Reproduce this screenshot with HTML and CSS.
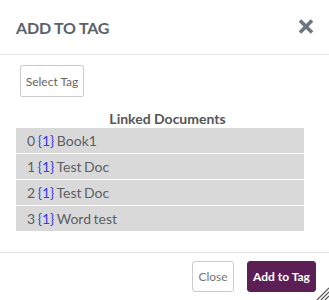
FILE: index.html
```html
<!DOCTYPE html>
<html lang="en">
<head>
  <meta charset="UTF-8" />
  <meta name="viewport" content="width=device-width, initial-scale=1.0" />
  <title>Add to Tag</title>
  <link rel="stylesheet" href="styles.css">
</head>
<body>
  <div class="modal">
    <div class="modal-header">
      <h2>ADD TO TAG</h2>
      <span class="close-x">
        <svg width="16" height="15" viewBox="0 0 16 15">
          <path d="M2 1.5 L14 13.5 M14 1.5 L2 13.5" stroke="#6b7682" stroke-width="3.6" stroke-linecap="butt"/>
        </svg>
      </span>
    </div>

    <div class="modal-body">
      <button class="btn-select">Select Tag</button>
      <h3>Linked Documents</h3>
      <div class="doc-list">
        <div class="doc-row">0 <span class="count">{1}</span> Book1</div>
        <div class="doc-row">1 <span class="count">{1}</span> Test Doc</div>
        <div class="doc-row">2 <span class="count">{1}</span> Test Doc</div>
        <div class="doc-row">3 <span class="count">{1}</span> Word test</div>
      </div>
    </div>

    <div class="modal-footer">
      <button class="btn-close">Close</button>
      <button class="btn-add">Add to Tag</button>
    </div>

    <svg class="resize" width="14" height="14" viewBox="0 0 14 14">
      <path d="M2 14 L14 2 M6 14 L14 6 M10 14 L14 10" stroke="#555" stroke-width="1.2"/>
    </svg>
  </div>
</body>
</html>
```

FILE: styles.css
```css
* {
  box-sizing: border-box;
  margin: 0;
  padding: 0;
  font-family: "Lato", "Liberation Sans", sans-serif;
}

body {
  background: #fff;
}

.modal {
  position: relative;
  width: 329px;
  height: 300px;
  display: flex;
  flex-direction: column;
  background: #fff;
}

.modal-header {
  height: 55px;
  padding: 0 15px 0 16px;
  display: flex;
  align-items: center;
  justify-content: space-between;
  border-bottom: 1px solid #e3e3e3;
}

.modal-header h2 {
  font-size: 16px;
  font-weight: bold;
  color: #58626c;
  letter-spacing: -0.2px;
}

.close-x {
  display: flex;
  margin-top: -1px;
}

.modal-body {
  flex: 1;
  padding: 10px 10px 0 16px;
}

.btn-select {
  margin-left: 4px;
  width: 64px;
  height: 32px;
  background: #fff;
  border: 1px solid #ccc;
  border-radius: 2px;
  font-size: 12px;
  color: #666;
}

.modal-body h3 {
  margin-top: 12px;
  text-align: center;
  font-size: 14px;
  line-height: 19px;
  font-weight: bold;
  color: #555;
}

.doc-list {
  width: 288px;
  display: flex;
  flex-direction: column;
  gap: 1px;
}

.doc-row {
  height: 25px;
  line-height: 25px;
  padding-left: 11px;
  background: #d9d9d9;
  font-size: 14px;
  color: #5b5f66;
  word-spacing: -1px;
}

.count {
  color: #3a3aee;
}

.modal-footer {
  height: 48px;
  padding: 8px 13px 0 0;
  border-top: 1px solid #e3e3e3;
  display: flex;
  justify-content: flex-end;
  align-items: flex-start;
  gap: 13px;
}

.modal-footer button {
  height: 31px;
  border-radius: 3px;
  font-size: 12px;
}

.btn-close {
  width: 42px;
  background: #fff;
  border: 1px solid #ccc;
  color: #777;
}

.btn-add {
  width: 69px;
  background: #5b1f56;
  border: 1px solid #5b1f56;
  color: #fff;
  font-weight: bold;
}

.resize {
  position: absolute;
  right: 0;
  bottom: 0;
}
```
